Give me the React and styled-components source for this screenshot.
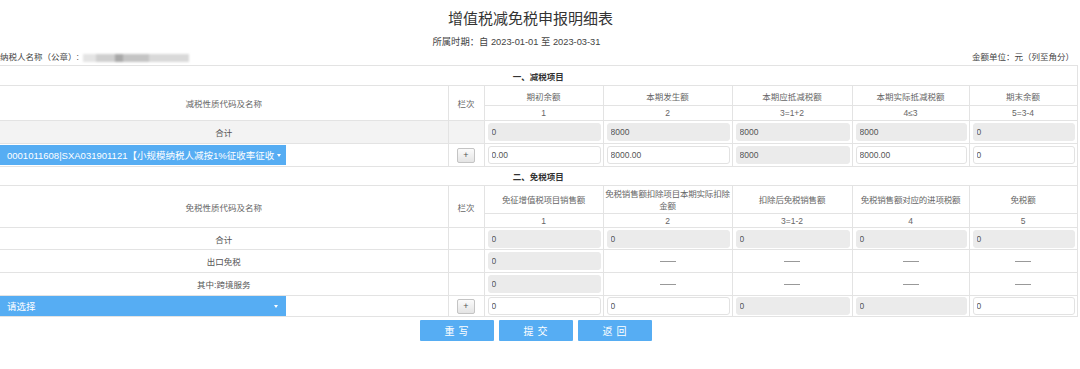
import React from "react";
import styled, { createGlobalStyle } from "styled-components";

const GlobalStyle = createGlobalStyle`
  body {
    margin: 0;
    background: #fff;
    font-family: "Liberation Sans", "Noto Sans CJK SC", sans-serif;
    color: #555;
  }
`;

const BLUE = "#56adf3";

const cols = [448, 36, 119, 129, 120, 117, 108];

const reduceHead = ["期初余额", "本期发生额", "本期应抵减税额", "本期实际抵减税额", "期末余额"];
const reduceNo = ["1", "2", "3=1+2", "4≤3", "5=3-4"];
const freeHead = [
  "免征增值税项目销售额",
  "免税销售额扣除项目本期实际扣除\n金额",
  "扣除后免税销售额",
  "免税销售额对应的进项税额",
  "免税额",
];
const freeNo = ["1", "2", "3=1-2", "4", "5"];

export default function App() {
  return (
    <Page>
      <GlobalStyle />
      <Title>增值税减免税申报明细表</Title>
      <Period>所属时期：自 2023-01-01 至 2023-03-31</Period>
      <InfoRow>
        <span>
          纳税人名称（公章）: <Blurred />
        </span>
        <span>金额单位：元（列至角分）</span>
      </InfoRow>

      <Table>
        <colgroup>
          {cols.map((w, i) => (
            <col key={i} style={{ width: w }} />
          ))}
        </colgroup>
        <tbody>
          <Row $h={20}>
            <SectionCell colSpan={7}>一、减税项目</SectionCell>
          </Row>
          <Row $h={20}>
            <HeadCell rowSpan={2}>减税性质代码及名称</HeadCell>
            <HeadCell rowSpan={2}>栏次</HeadCell>
            {reduceHead.map((t) => (
              <HeadCell key={t}>{t}</HeadCell>
            ))}
          </Row>
          <Row $h={15}>
            {reduceNo.map((t) => (
              <HeadCell key={t}>{t}</HeadCell>
            ))}
          </Row>
          <Row $h={23}>
            <LabelCell $shade>合计</LabelCell>
            <LabelCell $shade />
            {["0", "8000", "8000", "8000", "0"].map((v, i) => (
              <Cell key={i}>
                <Field $gray readOnly value={v} />
              </Cell>
            ))}
          </Row>
          <Row $h={23}>
            <Cell>
              <Select>
                <SelectText>0001011608|SXA031901121【小规模纳税人减按1%征收率征收</SelectText>
                <Caret />
              </Select>
            </Cell>
            <LabelCell>
              <PlusButton>+</PlusButton>
            </LabelCell>
            <Cell><Field readOnly value="0.00" /></Cell>
            <Cell><Field readOnly value="8000.00" /></Cell>
            <Cell><Field $gray readOnly value="8000" /></Cell>
            <Cell><Field readOnly value="8000.00" /></Cell>
            <Cell><Field readOnly value="0" /></Cell>
          </Row>

          <Row $h={19}>
            <SectionCell colSpan={7}>二、免税项目</SectionCell>
          </Row>
          <Row $h={28}>
            <HeadCell rowSpan={2}>免税性质代码及名称</HeadCell>
            <HeadCell rowSpan={2}>栏次</HeadCell>
            {freeHead.map((t) => (
              <HeadCell key={t} $wrap>{t}</HeadCell>
            ))}
          </Row>
          <Row $h={14}>
            {freeNo.map((t) => (
              <HeadCell key={t}>{t}</HeadCell>
            ))}
          </Row>
          <Row $h={22}>
            <LabelCell>合计</LabelCell>
            <LabelCell />
            {[0, 1, 2, 3, 4].map((i) => (
              <Cell key={i}>
                <Field $gray readOnly value="0" />
              </Cell>
            ))}
          </Row>
          {["出口免税", "其中:跨境服务"].map((name) => (
            <Row $h={23} key={name}>
              <LabelCell>{name}</LabelCell>
              <LabelCell />
              <Cell><Field $gray readOnly value="0" /></Cell>
              {[0, 1, 2, 3].map((i) => (
                <LabelCell key={i}>
                  <Dash />
                </LabelCell>
              ))}
            </Row>
          ))}
          <Row $h={21}>
            <Cell>
              <Select>
                <SelectText>请选择</SelectText>
                <Caret />
              </Select>
            </Cell>
            <LabelCell>
              <PlusButton>+</PlusButton>
            </LabelCell>
            <Cell><Field readOnly value="0" /></Cell>
            <Cell><Field readOnly value="0" /></Cell>
            <Cell><Field $gray readOnly value="0" /></Cell>
            <Cell><Field $gray readOnly value="0" /></Cell>
            <Cell><Field readOnly value="0" /></Cell>
          </Row>
        </tbody>
      </Table>

      <Actions>
        <ActionButton>重写</ActionButton>
        <ActionButton>提交</ActionButton>
        <ActionButton>返回</ActionButton>
      </Actions>
    </Page>
  );
}

const Page = styled.div`
  width: 1077px;
  font-size: 8.5px;
`;

const Title = styled.div`
  margin-top: 9px;
  padding-right: 16px;
  height: 20px;
  line-height: 20px;
  text-align: center;
  font-size: 15px;
  color: #333;
`;

const Period = styled.div`
  margin-top: 8px;
  padding-right: 44px;
  line-height: 10px;
  text-align: center;
  font-size: 9.3px;
  color: #444;
`;

const InfoRow = styled.div`
  margin-top: 5px;
  display: flex;
  justify-content: space-between;
  align-items: center;
  line-height: 10px;
  font-size: 8.5px;
  color: #444;
  padding-right: 3px;
`;

const Blurred = styled.span`
  display: inline-block;
  vertical-align: middle;
  width: 106px;
  height: 8px;
  margin-left: 2px;
  background: linear-gradient(
    90deg,
    #e4e4e4 0 12%,
    #cfcfcf 12% 30%,
    #a9a9a9 30% 38%,
    #c4c4c4 38% 62%,
    #d9d9d9 62% 100%
  );
  filter: blur(1px);
`;

const Table = styled.table`
  margin-top: 3px;
  width: 1077px;
  table-layout: fixed;
  border-collapse: collapse;
  border-top: 1px solid #e3e3e3;
  border-right: 1px solid #e3e3e3;
`;

const Row = styled.tr`
  height: ${(p) => p.$h}px;
`;

const Cell = styled.td`
  padding: 0;
  border: 1px solid #e3e3e3;
  border-left: none;
  vertical-align: middle;
  & + & {
    border-left: 1px solid #e3e3e3;
  }
`;

const SectionCell = styled.td`
  padding: 0;
  border-bottom: 1px solid #e3e3e3;
  text-align: center;
  font-weight: bold;
  color: #333;
  font-size: 8.5px;
`;

const HeadCell = styled.td`
  padding: 0 ${(p) => (p.$wrap ? "0" : "4px")};
  border: 1px solid #e3e3e3;
  text-align: center;
  color: #666;
  white-space: pre-line;
  letter-spacing: ${(p) => (p.$wrap ? "-0.2px" : "normal")};
  line-height: ${(p) => (p.$wrap ? "12px" : "normal")};
  &:first-child {
    border-left: none;
  }
`;

const LabelCell = styled.td`
  padding: 0;
  border: 1px solid #e3e3e3;
  text-align: center;
  color: #555;
  background: ${(p) => (p.$shade ? "#f3f3f3" : "#fff")};
  &:first-child {
    border-left: none;
  }
`;

const Field = styled.input`
  display: block;
  box-sizing: border-box;
  width: calc(100% - 5px);
  height: 18px;
  margin-left: 3px;
  padding: 0 0 0 3px;
  border: 1px solid ${(p) => (p.$gray ? "#ebebeb" : "#e2e2e2")};
  border-radius: 3px;
  background: ${(p) => (p.$gray ? "#ebebeb" : "#fff")};
  font-family: "Liberation Sans", sans-serif;
  font-size: 8.5px;
  color: #555;
  outline: none;
`;

const Select = styled.div`
  box-sizing: border-box;
  width: 286px;
  height: 20px;
  display: flex;
  align-items: center;
  padding: 0 8px 0 7px;
  background: ${BLUE};
  color: #fff;
  font-size: 9.5px;
`;

const SelectText = styled.span`
  flex: 1;
  white-space: nowrap;
`;

const Caret = styled.span`
  width: 0;
  height: 0;
  margin-left: 3px;
  border-left: 2.5px solid transparent;
  border-right: 2.5px solid transparent;
  border-top: 3px solid #fff;
`;

const PlusButton = styled.button`
  width: 18px;
  height: 15px;
  padding: 0;
  border: 1px solid #c4c4c4;
  border-radius: 2px;
  background: linear-gradient(#fbfbfb, #e4e4e4);
  font-family: "Liberation Sans", sans-serif;
  font-size: 9px;
  line-height: 12px;
  color: #555;
`;

const Dash = styled.span`
  display: inline-block;
  width: 16px;
  height: 1px;
  background: #999;
  vertical-align: middle;
`;

const Actions = styled.div`
  margin-top: 3px;
  padding-right: 6px;
  display: flex;
  justify-content: center;
  gap: 5px;
`;

const ActionButton = styled.button`
  width: 74px;
  height: 21px;
  padding: 0;
  border: none;
  border-radius: 1px;
  background: ${BLUE};
  color: #fff;
  font-family: "Liberation Sans", "Noto Sans CJK SC", sans-serif;
  font-size: 10px;
  letter-spacing: 4px;
  text-indent: 4px;
`;
